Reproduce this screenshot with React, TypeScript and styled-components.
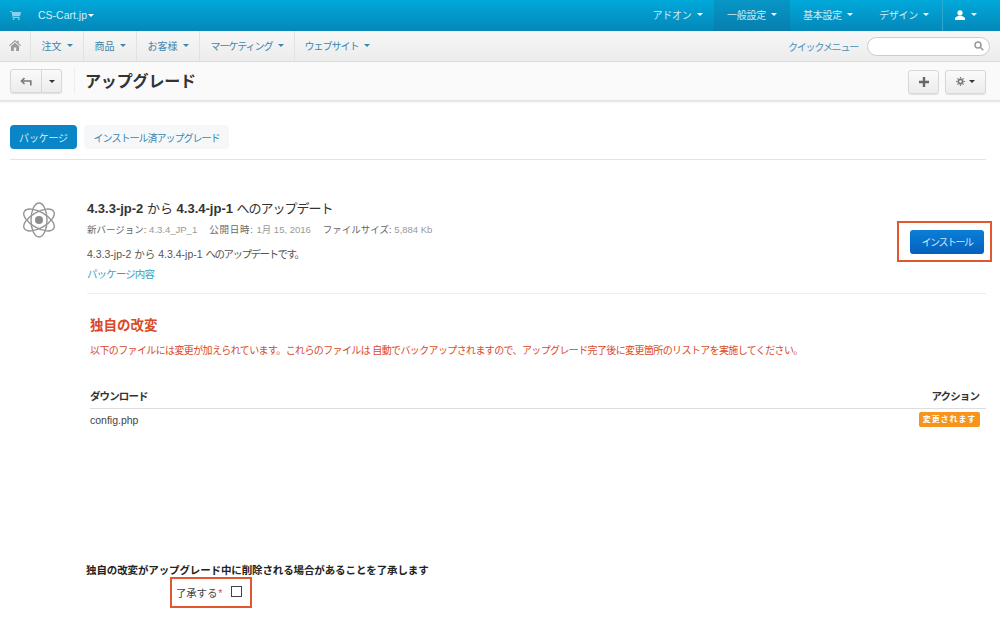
import React from "react";
import styled, { createGlobalStyle } from "styled-components";

const Global = createGlobalStyle`
  html, body { margin: 0; padding: 0; background: #fff; }
  body { font-family: "Liberation Sans", "Noto Sans CJK JP", sans-serif; font-size: 10px; color: #333; }
  #root { width: 1000px; height: 618px; overflow: hidden; }
`;

const Page = styled.div`display: flex; flex-direction: column; width: 1000px; height: 618px;`;

const TopBar = styled.header`
  height: 31px; flex: none; display: flex; align-items: stretch;
  background: linear-gradient(#00a9da, #0587b9);
  color: #cfeaf4; font-size: 10px;
`;
const Brand = styled.div`
  display: flex; align-items: center; padding: 0 0 2px 10px; gap: 17px; flex: 1; color: #d4eef7; font-size: 10.5px;
`;
const TopItem = styled.div<{ $active?: boolean; $w: number }>`
  width: ${p => p.$w}px; display: flex; align-items: center; justify-content: center; gap: 5px;
  white-space: nowrap; padding-bottom: 2px; box-sizing: border-box; letter-spacing: -.2px;
  background: ${p => p.$active ? "linear-gradient(#0796c7, #067fae)" : "transparent"};
`;
const UserItem = styled(TopItem)`border-left: 1px solid #2fa9d2; color: #fff; justify-content: flex-start; padding-left: 12px; gap: 6px;`;
const Caret = styled.i<{ $c?: string }>`
  display: inline-block; width: 0; height: 0; border-left: 3px solid transparent; border-right: 3px solid transparent;
  border-top: 3px solid ${p => p.$c || "currentColor"};
`;
const BrandCaret = styled(Caret)`margin-left: 1px; vertical-align: 2px;`;

const NavBar = styled.nav`
  height: 31px; flex: none; display: flex; align-items: stretch; box-sizing: border-box;
  background: linear-gradient(#f7f7f7, #ececec); border-bottom: 1px solid #dcdcdc;
  color: #3a87ad; font-size: 10px;
`;
const NavItem = styled.div<{ $w: number; $kana?: boolean; $last?: boolean }>`
  width: ${p => p.$w}px; box-sizing: border-box; display: flex; align-items: center; justify-content: center; gap: 5px;
  border-right: ${p => p.$last ? "0" : "1px solid #e2e2e2"}; white-space: nowrap; padding-bottom: 1px;
  letter-spacing: ${p => p.$kana ? "-1px" : "0"};
`;
const NavRight = styled.div`margin-left: auto; display: flex; align-items: center; gap: 9px; padding: 0 10px 0 0; letter-spacing: -1.2px; color: #4a94b8;`;
const Search = styled.div`
  width: 123px; height: 19px; box-sizing: border-box; border: 1px solid #ccc; border-radius: 10px; background: #fff;
  display: flex; align-items: center; justify-content: flex-end; padding-right: 5px; color: #999;
`;

const Toolbar = styled.div`
  height: 39px; flex: none; box-sizing: border-box; display: flex; align-items: center; padding: 0 14px 0 10px;
  background: #fafafa; border-bottom: 1px solid #e4e4e4; box-shadow: 0 1px 2px rgba(0,0,0,.12);
`;
const BtnGroup = styled.div`display: flex;`;
const ToolBtn = styled.div<{ $w: number; $pos?: "l" | "r" }>`
  width: ${p => p.$w}px; height: 24px; box-sizing: border-box; display: flex; align-items: center; justify-content: center; gap: 4px;
  background: linear-gradient(#fafafa, #ececec); border: 1px solid #d8d8d8; color: #555;
  border-radius: ${p => p.$pos === "l" ? "3px 0 0 3px" : p.$pos === "r" ? "0 3px 3px 0" : "3px"};
  ${p => p.$pos === "r" ? "border-left: 0;" : ""}
  box-shadow: 0 1px 1px rgba(0,0,0,.1);
`;
const Divider = styled.span`width: 1px; height: 26px; background: #eee; margin: 0 10px 0 12px;`;
const PageTitle = styled.h1`margin: 1px 0 0; font-size: 16px; font-weight: 700; color: #333; flex: 1; line-height: 24px; letter-spacing: -.15px;`;
const ToolRight = styled.div`display: flex; gap: 6px; margin-top: 1px;`;

const Content = styled.main`flex: 1; padding: 24px 14px 0 10px; display: flex; flex-direction: column;`;
const Tabs = styled.div`display: flex; gap: 7px; padding-bottom: 10px; border-bottom: 1px solid #e4e4e4;`;
const Tab = styled.div<{ $active?: boolean; $w: number }>`
  width: ${p => p.$w}px; height: 24px; display: flex; align-items: center; justify-content: center; border-radius: 4px; font-size: 10px;
  background: ${p => p.$active ? "#0a85c6" : "#f6f7f8"}; color: ${p => p.$active ? "#d8eef8" : "#3a87ad"};
  letter-spacing: ${p => p.$active ? "-.2px" : "-1px"};
`;

const Update = styled.section`display: flex; padding: 39px 0 0 11px; height: 134px; box-sizing: border-box; flex: none;`;
const IconCol = styled.div`width: 66px; flex: none; padding-top: 3px;`;
const Info = styled.div`flex: 1; border-bottom: 1px solid #eee; display: flex; flex-direction: column;`;
const InfoTitle = styled.div`font-size: 13px; color: #333; line-height: 20px; height: 20px; b { font-weight: 700; }`;
const TitleKana = styled.span`letter-spacing: -1px;`;
const Meta = styled.div`font-size: 9.5px; color: #999; margin-top: 4px; line-height: 14px; display: flex; gap: 12px;`;
const MetaLabel = styled.span<{ $spread?: boolean }>`color: #666; letter-spacing: ${p => p.$spread ? ".8px" : "0"};`;
const Desc = styled.div`font-size: 10.5px; color: #555; margin-top: 10px; line-height: 14px;`;
const DescKana = styled.span`letter-spacing: -1.5px;`;
const PkgLink = styled.div`font-size: 10.5px; color: #3a9fc0; margin-top: 6px; line-height: 14px; letter-spacing: -.9px;`;
const InfoMain = styled.div`display: flex; justify-content: space-between;`;
const Callout = styled.div`border: 2px solid #e4572e; box-sizing: border-box; display: flex; align-items: center;`;
const InstallBox = styled(Callout)`width: 95px; height: 41px; justify-content: flex-end; margin: 22px -6px 0 0; padding-right: 6px;`;
const InstallBtn = styled.div`
  width: 74px; height: 24px; border-radius: 3px; display: flex; align-items: center; justify-content: center;
  background: linear-gradient(#0a7fd6, #0560bd); color: #cfe6fa; font-size: 10px; letter-spacing: -1.5px;
`;

const Custom = styled.section`padding: 22px 0 0 80px; flex: none;`;
const RedTitle = styled.h2`margin: 0; font-size: 13.5px; font-weight: 700; color: #d9492a; line-height: 20px;`;
const RedText = styled.p`margin: 8px 0 0; font-size: 10px; color: #d9492a; line-height: 14px; letter-spacing: -.62px; white-space: nowrap;`;
const Table = styled.div`margin-top: 31px;`;
const THead = styled.div`
  display: flex; justify-content: space-between; font-size: 10.5px; font-weight: 700; color: #333;
  padding-bottom: 5px; border-bottom: 1px solid #ddd; line-height: 14px; letter-spacing: -.9px;
`;
const TRow = styled.div`display: flex; justify-content: space-between; align-items: center; font-size: 10.5px; color: #444; padding-top: 3px; line-height: 14px; padding-right: 6px;`;
const THeadCell = styled.span`&:last-child { margin-right: 7px; }`;
const Badge = styled.span`
  background: #f7941e; color: #fff; font-size: 8px; font-weight: 700; border-radius: 2px; height: 15px; width: 61px;
  display: flex; align-items: center; justify-content: center; letter-spacing: .9px;
`;

const Ack = styled.section`margin-top: 136px; padding-left: 76px; flex: none;`;
const AckTitle = styled.div`font-size: 10.5px; font-weight: 700; color: #222; line-height: 14px; letter-spacing: -.12px;`;
const AckBox = styled(Callout)`width: 82px; height: 31px; margin: 0 0 0 84px; padding-left: 4px; font-size: 10.5px; color: #444; letter-spacing: -.2px;`;
const Star = styled.span`color: #e0457b; margin-left: 1px;`;
const Check = styled.span`width: 11px; height: 11px; box-sizing: border-box; border: 1px solid #444; margin: -2px 0 0 9px; flex: none;`;

const Cart = () => (
  <svg width="11" height="10" viewBox="0 0 12 11" fill="#8fd0e8"><path d="M0 1h2.2l.5 1.2H12l-1 4.6H3.6l.2 1H10.5v1H3L1.6 2H0z" /><circle cx="4" cy="10" r="1" /><circle cx="9.6" cy="10" r="1" /></svg>
);
const Home = () => (
  <svg width="12" height="11" viewBox="0 0 12 11" fill="#9a9a9a"><path d="M6 0 0 5.5l.7.8L6 1.6l5.3 4.7.7-.8L9.6 3.3V.7H8.2V2z" /><path d="M2 6.2 6 2.7l4 3.5V11H7.2V7.6H4.8V11H2z" /></svg>
);
const User = () => (
  <svg width="10" height="10" viewBox="0 0 10 10" fill="#fff"><circle cx="5" cy="2.8" r="2.6" /><path d="M0 10V8.4C0 7 2.5 6.3 3.6 5.8h2.8C7.5 6.3 10 7 10 8.4V10z" /></svg>
);
const Magnify = () => (
  <svg width="10" height="10" viewBox="0 0 10 10" fill="none" stroke="#999" strokeWidth="1.5"><circle cx="4" cy="4" r="3" /><path d="m6.3 6.3 3 3" /></svg>
);
const Back = () => (
  <svg width="12" height="9" viewBox="0 0 12 9" fill="none" stroke="#777" strokeWidth="1.6"><path d="M10.8 8.5V4H1.5" /><path d="M4.5 1 1.5 4l3 3" /></svg>
);
const Plus = () => (
  <svg width="10" height="10" viewBox="0 0 10 10" fill="#666"><path d="M3.8 0h2.4v3.8H10v2.4H6.2V10H3.8V6.2H0V3.8h3.8z" /></svg>
);
const Gear = () => (
  <svg width="9" height="9" viewBox="0 0 10 10" fill="none" stroke="#777"><circle cx="5" cy="5" r="2.4" strokeWidth="1.8" /><path d="M5 0v1.6M5 8.4V10M0 5h1.6M8.4 5H10M1.5 1.5l1.1 1.1M7.4 7.4l1.1 1.1M8.5 1.5 7.4 2.6M2.6 7.4 1.5 8.5" strokeWidth="1.3" /></svg>
);
const Atom = () => (
  <svg width="36" height="36" viewBox="0 0 36 36" fill="none" stroke="#949494" strokeWidth="1.4">
    <circle cx="18" cy="18" r="4" fill="#8c8c8c" stroke="none" />
    <ellipse cx="18" cy="18" rx="17" ry="8" transform="rotate(30 18 18)" />
    <ellipse cx="18" cy="18" rx="17" ry="8" transform="rotate(90 18 18)" />
    <ellipse cx="18" cy="18" rx="17" ry="8" transform="rotate(150 18 18)" />
  </svg>
);

export default function App() {
  return (
    <Page>
      <Global />
      <TopBar>
        <Brand><Cart /><span>CS-Cart.jp<BrandCaret $c="#fff" /></span></Brand>
        <TopItem $w={73}>アドオン <Caret $c="#fff" /></TopItem>
        <TopItem $w={76} $active>一般設定 <Caret $c="#fff" /></TopItem>
        <TopItem $w={76}>基本設定 <Caret $c="#fff" /></TopItem>
        <TopItem $w={76}>デザイン <Caret $c="#fff" /></TopItem>
        <UserItem $w={58}><User /><Caret /></UserItem>
      </TopBar>
      <NavBar>
        <NavItem $w={31}><Home /></NavItem>
        <NavItem $w={53}>注文 <Caret /></NavItem>
        <NavItem $w={53}>商品 <Caret /></NavItem>
        <NavItem $w={63}>お客様 <Caret /></NavItem>
        <NavItem $w={95} $kana>マーケティング <Caret /></NavItem>
        <NavItem $w={84} $kana $last>ウェブサイト <Caret /></NavItem>
        <NavRight>クイックメニュー<Search><Magnify /></Search></NavRight>
      </NavBar>
      <Toolbar>
        <BtnGroup>
          <ToolBtn $w={32} $pos="l"><Back /></ToolBtn>
          <ToolBtn $w={20} $pos="r"><Caret $c="#333" /></ToolBtn>
        </BtnGroup>
        <Divider />
        <PageTitle>アップグレード</PageTitle>
        <ToolRight>
          <ToolBtn $w={31}><Plus /></ToolBtn>
          <ToolBtn $w={41}><Gear /><Caret $c="#333" /></ToolBtn>
        </ToolRight>
      </Toolbar>
      <Content>
        <Tabs>
          <Tab $active $w={67}>パッケージ</Tab>
          <Tab $w={145}>インストール済アップグレード</Tab>
        </Tabs>
        <Update>
          <IconCol><Atom /></IconCol>
          <Info>
            <InfoMain>
              <div>
                <InfoTitle><b>4.3.3-jp-2</b> から <b>4.3.4-jp-1</b> <TitleKana>へのアップデート</TitleKana></InfoTitle>
                <Meta>
                  <span><MetaLabel>新バージョン:</MetaLabel> 4.3.4_JP_1</span>
                  <span><MetaLabel $spread>公開日時:</MetaLabel> 1月 15, 2016</span>
                  <span><MetaLabel>ファイルサイズ:</MetaLabel> 5,884 Kb</span>
                </Meta>
                <Desc>4.3.3-jp-2 から 4.3.4-jp-1 <DescKana>へのアップデートです。</DescKana></Desc>
                <PkgLink>パッケージ内容</PkgLink>
              </div>
              <InstallBox><InstallBtn>インストール</InstallBtn></InstallBox>
            </InfoMain>
          </Info>
        </Update>
        <Custom>
          <RedTitle>独自の改変</RedTitle>
          <RedText>以下のファイルには変更が加えられています。これらのファイルは 自動でバックアップされますので、アップグレード完了後に変更箇所のリストアを実施してください。</RedText>
          <Table>
            <THead><span>ダウンロード</span><THeadCell>アクション</THeadCell></THead>
            <TRow><span>config.php</span><Badge>変更されます</Badge></TRow>
          </Table>
        </Custom>
        <Ack>
          <AckTitle>独自の改変がアップグレード中に削除される場合があることを了承します</AckTitle>
          <AckBox>了承する<Star>*</Star><Check /></AckBox>
        </Ack>
      </Content>
    </Page>
  );
}
